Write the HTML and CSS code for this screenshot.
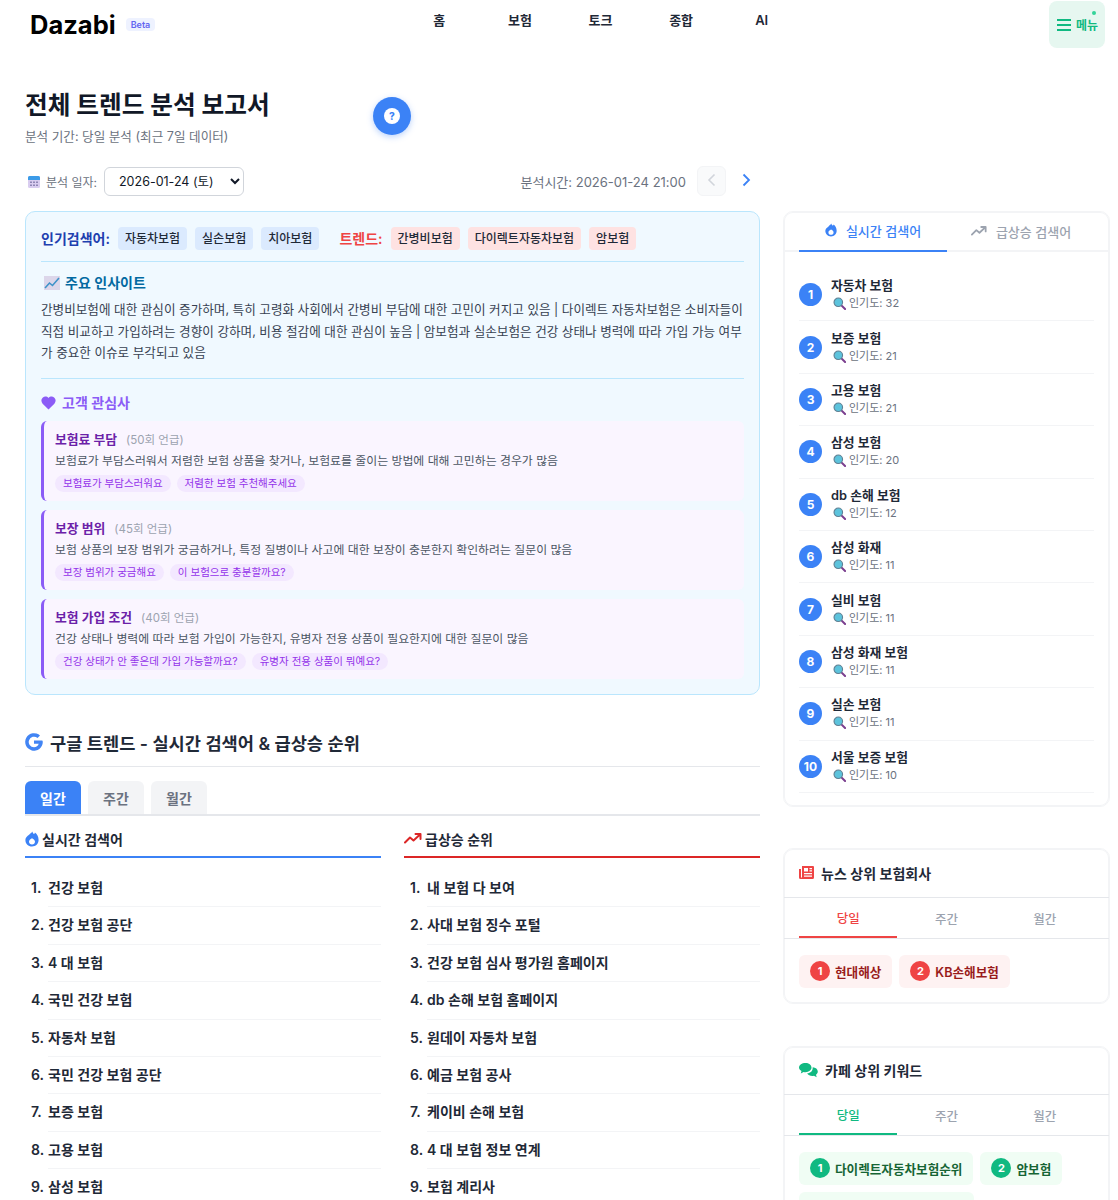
FILE: index.html
```html
<!DOCTYPE html>
<html lang="ko">
<head>
<meta charset="utf-8">
<title>Dazabi</title>
<link rel="stylesheet" href="styles.css">
</head>
<body>
<svg class="defs" width="0" height="0" aria-hidden="true">
  <defs>
    <symbol id="mag" viewBox="0 0 14 14">
      <line x1="8.5" y1="8.5" x2="13" y2="13" stroke="#7b3f8f" stroke-width="2.2" stroke-linecap="round"/>
      <circle cx="5.7" cy="5.7" r="4.6" fill="#5cc3dc" stroke="#5f7f92" stroke-width="1.2"/>
    </symbol>
    <symbol id="fire" viewBox="0 0 14 16">
      <path fill-rule="evenodd" d="M7.4 .5c.4 1.8 1.2 2.7 2 2.2.4-.3.5-.8.5-1.2C12 3 13.6 5.500 13.600 9c0 3.700-2.900 6.500-6.600 6.500S.4 12.700.4 9.200C.4 5.800 3.400 4.600 4.600 3.200 5.500 2.200 6.800 1.600 7.400.5zM7 7.300c-1.800 1-3 2-3 3.500 0 1.600 1.300 2.700 3 2.700s3-1.100 3-2.700c0-1.500-1.300-2.600-3-3.500z"/>
    </symbol>
    <symbol id="trend" viewBox="0 0 18 11">
      <path fill="none" stroke="currentColor" stroke-width="2" stroke-linecap="round" stroke-linejoin="round" d="M1 9.500l5-5 3.500 3L16 1.500M11.500 1h5v5"/>
    </symbol>
  </defs>
</svg>
<div class="page">
  <header class="topbar">
    <div class="brand"><span class="logo">Dazabi</span><span class="beta">Beta</span></div>
    <nav class="nav">
      <a>홈</a><a>보험</a><a>토크</a><a>종합</a><a>AI</a>
    </nav>
    <button class="menu">
      <span class="menu-dot"></span>
      <span class="bars"><i></i><i></i><i></i></span>
      <span class="menu-label">메뉴</span>
    </button>
  </header>

  <main class="content">
    <section class="title-block">
      <div class="title-row">
        <div class="title-text">
          <h1>전체 트렌드 분석 보고서</h1>
          <p>분석 기간: 당일 분석 (최근 7일 데이터)</p>
        </div>
        <span class="help"><span>?</span></span>
      </div>
    </section>

    <section class="date-row">
      <div class="date-left">
        <svg class="cal" width="14" height="14" viewBox="0 0 14 14">
          <rect x="1" y="1" width="12" height="12" rx="1.500" fill="#d9cdf0"/>
          <path d="M1 2.500A1.500 1.500 0 0 1 2.500 1h9A1.500 1.500 0 0 1 13 2.500V5H1z" fill="#3b9be8"/>
          <path d="M3 6.500h2v1.500H3zm3 0h2v1.500H6zm3 0h2v1.500H9zM3 9.500h2V11H3zm3 0h2V11H6zm3 0h2V11H9z" fill="#8f86b5"/>
        </svg>
        <span class="date-label">분석 일자:</span>
        <select class="date-select"><option>2026-01-24 (토)</option></select>
      </div>
      <div class="date-right">
        <span class="date-time">분석시간: 2026-01-24 21:00</span>
        <button class="pager pager-off">
          <svg width="9" height="14" viewBox="0 0 9 14"><path d="M7.500 1.500L2 7l5.500 5.500" fill="none" stroke="#d1d5db" stroke-width="1.600"/></svg>
        </button>
        <button class="pager pager-on">
          <svg width="9" height="14" viewBox="0 0 9 14"><path d="M1.500 1.500L7 7l-5.500 5.500" fill="none" stroke="#3b82f6" stroke-width="1.800"/></svg>
        </button>
      </div>
    </section>

    <div class="columns">
      <div class="col-main">
        <section class="insight">
          <div class="kw-row">
            <strong class="kw-label kw-blue">인기검색어:</strong>
            <span class="chip chip-blue">자동차보험</span>
            <span class="chip chip-blue">실손보험</span>
            <span class="chip chip-blue">치아보험</span>
            <strong class="kw-label kw-red">트렌드:</strong>
            <span class="chip chip-red">간병비보험</span>
            <span class="chip chip-red">다이렉트자동차보험</span>
            <span class="chip chip-red">암보험</span>
          </div>

          <div class="insight-body">
            <h3 class="insight-head">
              <svg width="18" height="16" viewBox="0 0 18 16">
                <rect x="1" y="1" width="16" height="14" fill="#dcd6ea"/>
                <path d="M2 13l4.500-5 3 2.500L16 3" fill="none" stroke="#3f93c9" stroke-width="1.600"/>
              </svg>
              주요 인사이트
            </h3>
            <p>간병비보험에 대한 관심이 증가하며, 특히 고령화 사회에서 간병비 부담에 대한 고민이 커지고 있음 | 다이렉트 자동차보험은 소비자들이 직접 비교하고 가입하려는 경향이 강하며, 비용 절감에 대한 관심이 높음 | 암보험과 실손보험은 건강 상태나 병력에 따라 가입 가능 여부가 중요한 이슈로 부각되고 있음</p>
          </div>

          <div class="concern">
            <h3 class="concern-head">
              <svg width="15" height="14" viewBox="0 0 16 15"><path d="M8 14.500L1.700 8.200C-.2 6.200 0 3 2 1.500 3.900.1 6.500.4 8 2.200 9.500.4 12.100.1 14 1.500c2 1.500 2.200 4.700.3 6.700z" fill="#8b5cf6"/></svg>
              고객 관심사
            </h3>
            <article class="c-card">
              <div class="c-title"><strong>보험료 부담</strong><span>(50회 언급)</span></div>
              <p>보험료가 부담스러워서 저렴한 보험 상품을 찾거나, 보험료를 줄이는 방법에 대해 고민하는 경우가 많음</p>
              <div class="c-tags"><span>보험료가 부담스러워요</span><span>저렴한 보험 추천해주세요</span></div>
            </article>
            <article class="c-card">
              <div class="c-title"><strong>보장 범위</strong><span>(45회 언급)</span></div>
              <p>보험 상품의 보장 범위가 궁금하거나, 특정 질병이나 사고에 대한 보장이 충분한지 확인하려는 질문이 많음</p>
              <div class="c-tags"><span>보장 범위가 궁금해요</span><span>이 보험으로 충분할까요?</span></div>
            </article>
            <article class="c-card">
              <div class="c-title"><strong>보험 가입 조건</strong><span>(40회 언급)</span></div>
              <p>건강 상태나 병력에 따라 보험 가입이 가능한지, 유병자 전용 상품이 필요한지에 대한 질문이 많음</p>
              <div class="c-tags"><span>건강 상태가 안 좋은데 가입 가능할까요?</span><span>유병자 전용 상품이 뭐예요?</span></div>
            </article>
          </div>
        </section>

        <section class="gtrend">
          <h2 class="g-head">
            <svg width="18" height="18" viewBox="0 0 18 18"><path d="M17.300 7.500H9v3.300h4.700c-.6 2.200-2.400 3.500-4.700 3.500a5.300 5.300 0 1 1 3.500-9.300l2.500-2.500A8.800 8.800 0 1 0 17.800 9c0-.5-.2-1-.5-1.500z" fill="#4285f4"/></svg>
            구글 트렌드 - 실시간 검색어 &amp; 급상승 순위
          </h2>
          <div class="g-tabs"><button class="g-tab g-on">일간</button><button class="g-tab">주간</button><button class="g-tab">월간</button></div>
          <div class="g-cols">
            <div>
              <h4 class="g-col-head g-blue"><svg class="fire-blue" width="14" height="16"><use href="#fire"/></svg>실시간 검색어</h4>
              <ol class="g-list">
                <li>건강 보험</li><li>건강 보험 공단</li><li>4 대 보험</li><li>국민 건강 보험</li><li>자동차 보험</li><li>국민 건강 보험 공단</li><li>보증 보험</li><li>고용 보험</li><li>삼성 보험</li>
              </ol>
            </div>
            <div>
              <h4 class="g-col-head g-red"><svg class="trend-red" width="18" height="11"><use href="#trend"/></svg>급상승 순위</h4>
              <ol class="g-list">
                <li>내 보험 다 보여</li><li>사대 보험 징수 포털</li><li>건강 보험 심사 평가원 홈페이지</li><li>db 손해 보험 홈페이지</li><li>원데이 자동차 보험</li><li>예금 보험 공사</li><li>케이비 손해 보험</li><li>4 대 보험 정보 연계</li><li>보험 계리사</li>
              </ol>
            </div>
          </div>
        </section>
      </div>

      <aside class="col-side">
        <section class="card">
          <div class="rt-tabs">
            <button class="rt-tab rt-on"><svg class="fire-blue" width="12" height="14"><use href="#fire"/></svg>실시간 검색어</button>
            <button class="rt-tab"><svg class="trend-gray" width="16" height="10"><use href="#trend"/></svg>급상승 검색어</button>
          </div>
          <ul class="rt-list">
            <li><span class="num">1</span><div><b>자동차 보험</b><small><svg width="13" height="13"><use href="#mag"/></svg>인기도: 32</small></div></li>
            <li><span class="num">2</span><div><b>보증 보험</b><small><svg width="13" height="13"><use href="#mag"/></svg>인기도: 21</small></div></li>
            <li><span class="num">3</span><div><b>고용 보험</b><small><svg width="13" height="13"><use href="#mag"/></svg>인기도: 21</small></div></li>
            <li><span class="num">4</span><div><b>삼성 보험</b><small><svg width="13" height="13"><use href="#mag"/></svg>인기도: 20</small></div></li>
            <li><span class="num">5</span><div><b>db 손해 보험</b><small><svg width="13" height="13"><use href="#mag"/></svg>인기도: 12</small></div></li>
            <li><span class="num">6</span><div><b>삼성 화재</b><small><svg width="13" height="13"><use href="#mag"/></svg>인기도: 11</small></div></li>
            <li><span class="num">7</span><div><b>실비 보험</b><small><svg width="13" height="13"><use href="#mag"/></svg>인기도: 11</small></div></li>
            <li><span class="num">8</span><div><b>삼성 화재 보험</b><small><svg width="13" height="13"><use href="#mag"/></svg>인기도: 11</small></div></li>
            <li><span class="num">9</span><div><b>실손 보험</b><small><svg width="13" height="13"><use href="#mag"/></svg>인기도: 11</small></div></li>
            <li><span class="num">10</span><div><b>서울 보증 보험</b><small><svg width="13" height="13"><use href="#mag"/></svg>인기도: 10</small></div></li>
          </ul>
        </section>

        <section class="card card-news">
          <h3 class="card-head">
            <svg width="15" height="13" viewBox="0 0 15 13"><path fill="#ef4444" fill-rule="evenodd" d="M3 0h11a1 1 0 0 1 1 1v10.500a1.500 1.500 0 0 1-1.500 1.500H1.500A1.500 1.500 0 0 1 0 11.500V3h2v8.500h1zM5 2v3.500h4V2zm5.500 0v1.200H13V2zm0 2.300v1.200H13V4.300zM5 7v1.200h8V7zm0 2.500v1.200h8V9.500z"/></svg>
            뉴스 상위 보험회사
          </h3>
          <div class="sub-tabs sub-red"><button class="on">당일</button><button>주간</button><button>월간</button></div>
          <div class="rank-wrap">
            <span class="rank rank-red"><i>1</i>현대해상</span>
            <span class="rank rank-red"><i>2</i>KB손해보험</span>
          </div>
        </section>

        <section class="card card-cafe">
          <h3 class="card-head">
            <svg width="19" height="15" viewBox="0 0 19 15"><path fill="#10b981" d="M6.500 0C9.900 0 12.500 2 12.500 4.600S9.900 9.200 6.500 9.200c-.7 0-1.300-.1-1.900-.2L1.800 10.500l.7-2.500C1 7.100 0 6 0 4.600 0 2 3 0 6.500 0z"/><path fill="#10b981" d="M13.700 4.200c2.900.2 5.100 2 5.100 4.300 0 1.300-.7 2.400-1.800 3.200l.7 2.500-2.800-1.400c-.5.100-1 .2-1.500.2-2.400 0-4.400-1-5.200-2.700 3.200-.2 5.800-2.300 5.500-6.100z"/></svg>
            카페 상위 키워드
          </h3>
          <div class="sub-tabs sub-green"><button class="on">당일</button><button>주간</button><button>월간</button></div>
          <div class="rank-wrap">
            <span class="rank rank-green"><i>1</i>다이렉트자동차보험순위</span>
            <span class="rank rank-green"><i>2</i>암보험</span>
            <span class="rank rank-green rank-empty"></span>
          </div>
        </section>
      </aside>
    </div>
  </main>
</div>
</body>
</html>
```

FILE: styles.css
```css
* { box-sizing: border-box; }
html, body { margin: 0; padding: 0; }
body {
  height: 1200px;
  overflow: hidden;
  background: #fff;
  color: #1f2937;
  font-family: Inter, "Noto Sans CJK KR", sans-serif;
}
button { font-family: inherit; border: 0; background: none; cursor: pointer; padding: 0; }
h1, h2, h3, h4, p, ul, ol { margin: 0; padding: 0; }
li { list-style: none; }
.defs { position: absolute; }

.topbar {
  display: grid;
  grid-template-columns: 369px 403px 1fr;
  padding: 1px 13px 0 30px;
  height: 48px;
}
.brand { display: flex; align-items: center; gap: 10px; height: 47px; }
.logo { font-size: 25.500px; font-weight: 700; color: #000; }
.beta {
  font-size: 9px; font-weight: 600; color: #6366f1; background: #eef2ff;
  border-radius: 4px; padding: 1px 5px; line-height: 11px;
}
.nav { display: grid; grid-template-columns: repeat(5, 1fr); text-align: center; padding-top: 10px; }
.nav a { font-size: 13px; font-weight: 600; color: #1f2937; line-height: 18px; }
.menu {
  position: relative; justify-self: end; width: 56px; height: 47px;
  display: flex; align-items: center; gap: 5px; padding: 0 0 0 8px;
  background: #e6f7f0; border-radius: 8px;
  color: #10b981; font-size: 12px; font-weight: 600;
}
.menu-label { white-space: nowrap; }
.menu-dot { position: absolute; top: 10px; right: 9px; width: 4px; height: 4px; border-radius: 50%; background: #34d399; }
.bars { display: grid; gap: 3px; width: 14px; flex: none; }
.bars i { display: block; height: 2px; background: #10b981; }

.content { padding: 0 8px 0 25px; }
.title-row { display: flex; align-items: flex-start; padding-top: 41px; }
.title-text { width: 348px; }
h1 { font-size: 24.700px; line-height: 32px; font-weight: 700; color: #111827; }
.title-text p { font-size: 12.600px; line-height: 20px; margin-top: 6px; color: #6b7280; }
.help {
  width: 38px; height: 38px; border-radius: 50%; background: #3b82f6;
  box-shadow: 0 2px 6px rgba(59, 130, 246, .35);
  display: flex; align-items: center; justify-content: center; margin-top: 8px;
}
.help span {
  width: 16px; height: 16px; border-radius: 50%; background: #fff; color: #3b82f6;
  font-size: 10px; font-weight: 800; line-height: 16px; text-align: center;
}

.date-row { width: 735px; display: flex; align-items: center; justify-content: space-between; margin-top: 19px; height: 30px; }
.date-left { display: flex; align-items: center; }
.cal { margin: 1px 5px 0 2px; flex: none; }
.date-label { font-size: 12px; color: #6b7280; margin-right: 7px; }
.date-select {
  width: 140px; height: 29px; padding: 0 10px; font-size: 12.500px; color: #111827;
  font-family: Inter, "Noto Sans CJK KR", sans-serif;
  background: #fff; border: 1px solid #d1d5db; border-radius: 6px;
}
.date-right { display: flex; align-items: center; }
.date-time { font-size: 13px; color: #6b7280; margin-right: 11px; }
.pager { width: 29px; height: 30px; padding-bottom: 2px; border-radius: 6px; display: flex; align-items: center; justify-content: center; }
.pager-off { background: #f9fafb; border: 1px solid #f3f4f6; margin-right: 5px; }
.pager-on { margin-left: 1px; margin-right: -1px; }

.columns { display: grid; grid-template-columns: 735px 327px; gap: 23px; margin-top: 15px; }

.insight { background: #f0f9ff; border: 1px solid #bae6fd; border-radius: 10px; padding: 14px 15px 15px; height: 484px; }
.kw-row { display: flex; align-items: center; gap: 8px; padding-bottom: 11px; border-bottom: 1px solid #bae6fd; height: 36px; }
.kw-label { font-size: 14px; font-weight: 600; }
.kw-blue { color: #1e40af; }
.kw-red { color: #ef4444; margin-left: 12px; }
.chip { font-size: 12px; font-weight: 500; line-height: 23px; padding: 0 7px; border-radius: 4px; color: #1f2937; }
.chip-blue { background: #dbeafe; }
.chip-red { background: #fee2e2; }

.insight-body { padding: 10px 0 14px; border-bottom: 1px solid #bae6fd; }
.insight-head { display: flex; align-items: center; gap: 4px; padding-left: 2px; font-size: 14px; font-weight: 600; color: #0369a1; line-height: 22px; }
.insight-body p { font-size: 12.600px; line-height: 21.700px; color: #374151; margin-top: 5px; }

.concern { padding-top: 14px; }
.concern-head { display: flex; align-items: center; gap: 6px; font-size: 14px; font-weight: 600; color: #8b5cf6; line-height: 20px; margin-bottom: 8px; }
.c-card {
  height: 80px; margin-bottom: 9px; padding: 10px 10px 0 11px;
  background: #faf5ff; border-left: 3px solid #8b5cf6; border-radius: 6px;
}
.c-title { display: flex; align-items: baseline; gap: 9px; line-height: 18px; }
.c-title strong { font-size: 12.800px; font-weight: 600; color: #6b21a8; }
.c-title span { font-size: 11.500px; color: #9ca3af; }
.c-card p { font-size: 11.900px; line-height: 18px; color: #4b5563; margin-top: 3px; }
.c-tags { display: flex; gap: 6px; margin-top: 5px; }
.c-tags span { font-size: 10.500px; line-height: 17px; padding: 0 8px; background: #f3e8ff; color: #9333ea; border-radius: 9px; }

.gtrend { margin-top: 33px; }
.g-head { display: flex; align-items: center; gap: 7px; font-size: 17.600px; font-weight: 600; color: #1f2937; padding-bottom: 10px; border-bottom: 1px solid #e5e7eb; box-sizing: content-box; height: 28px; }
.g-tabs { display: flex; gap: 7px; margin-top: 14px; border-bottom: 2px solid #e5e7eb; height: 35px; }
.g-tab { width: 56px; height: 33px; font-size: 14px; font-weight: 600; color: #6b7280; background: #f3f4f6; border-radius: 6px 6px 0 0; }
.g-on { background: #3b82f6; color: #fff; }
.g-cols { display: grid; grid-template-columns: 1fr 1fr; gap: 23px; margin-top: 9px; }
.g-col-head { display: flex; align-items: center; gap: 3px; font-size: 14px; font-weight: 600; color: #1f2937; height: 33px; padding-bottom: 4px; border-bottom: 2px solid; }
.g-blue { border-color: #3b82f6; }
.g-red { border-color: #dc2626; }
.fire-blue { fill: #3b82f6; color: #3b82f6; }
.trend-red { color: #dc2626; }
.trend-gray { color: #9ca3af; }
.g-list { counter-reset: g; margin-top: 12px; }
.g-list li {
  counter-increment: g; position: relative; margin-left: 23px; height: 37.400px; line-height: 35.400px;
  font-size: 14px; font-weight: 600; color: #1f2937; border-bottom: 1px solid #f3f4f6;
}
.g-list li::before { content: counter(g) "."; position: absolute; left: -17px; font-weight: 600; }

.card { border: 1px solid #f3f4f6; box-shadow: 0 0 0 1px #f3f4f6 inset; border-radius: 10px; background: #fff; }
.rt-tabs { display: grid; grid-template-columns: 148px 148px; padding: 0 15px; height: 40px; border-bottom: 2px solid #f3f4f6; }
.rt-tab { display: flex; align-items: center; justify-content: center; gap: 9px; height: 40px; padding-bottom: 2px; font-size: 13px; font-weight: 500; color: #9ca3af; }
.rt-on { color: #3b82f6; border-bottom: 2px solid #3b82f6; }
.rt-list { padding: 17px 15px 13px; }
.rt-list li { display: flex; align-items: center; gap: 9px; height: 52.400px; border-bottom: 1px solid #f3f4f6; }
.num { width: 23px; height: 23px; flex: none; border-radius: 50%; background: #3b82f6; color: #fff; font-size: 12px; font-weight: 700; text-align: center; line-height: 23px; }
.rt-list b { display: block; font-size: 12.800px; font-weight: 600; line-height: 17px; color: #1f2937; }
.rt-list small { display: flex; align-items: center; gap: 3px; font-size: 11px; line-height: 17px; margin-top: 1px; color: #6b7280; margin-left: 2px; }

.card-news { margin-top: 41px; height: 156px; }
.card-cafe { margin-top: 42px; height: 200px; }
.card-head { display: flex; align-items: center; gap: 7px; height: 48px; padding: 0 15px; font-size: 14px; font-weight: 600; color: #1f2937; border-bottom: 1px solid #e5e7eb; }
.card-news .card-head { height: 49px; }
.sub-tabs { display: grid; grid-template-columns: repeat(3, 98.300px); padding: 0 15px; height: 41px; border-bottom: 1px solid #e5e7eb; }
.sub-tabs button { height: 40px; padding-top: 2px; font-size: 12.500px; font-weight: 500; color: #9ca3af; }
.sub-red .on { color: #ef4444; border-bottom: 2px solid #ef4444; }
.sub-green .on { color: #10b981; border-bottom: 2px solid #10b981; }
.rank-wrap { display: flex; flex-wrap: wrap; gap: 7px; padding: 16px 15px; }
.rank { display: inline-flex; align-items: center; gap: 5px; height: 33px; padding: 0 11px; border-radius: 6px; font-size: 12.600px; font-weight: 600; }
.rank i { width: 20px; height: 20px; border-radius: 50%; color: #fff; font-size: 11px; font-weight: 700; font-style: normal; text-align: center; line-height: 20px; }
.rank-red { background: #fef2f2; color: #991b1b; }
.rank-red i { background: #ef4444; }
.rank-green { background: #f0fdf4; color: #166534; }
.rank-green i { background: #10b981; }
.rank-empty { width: 175px; }
```
